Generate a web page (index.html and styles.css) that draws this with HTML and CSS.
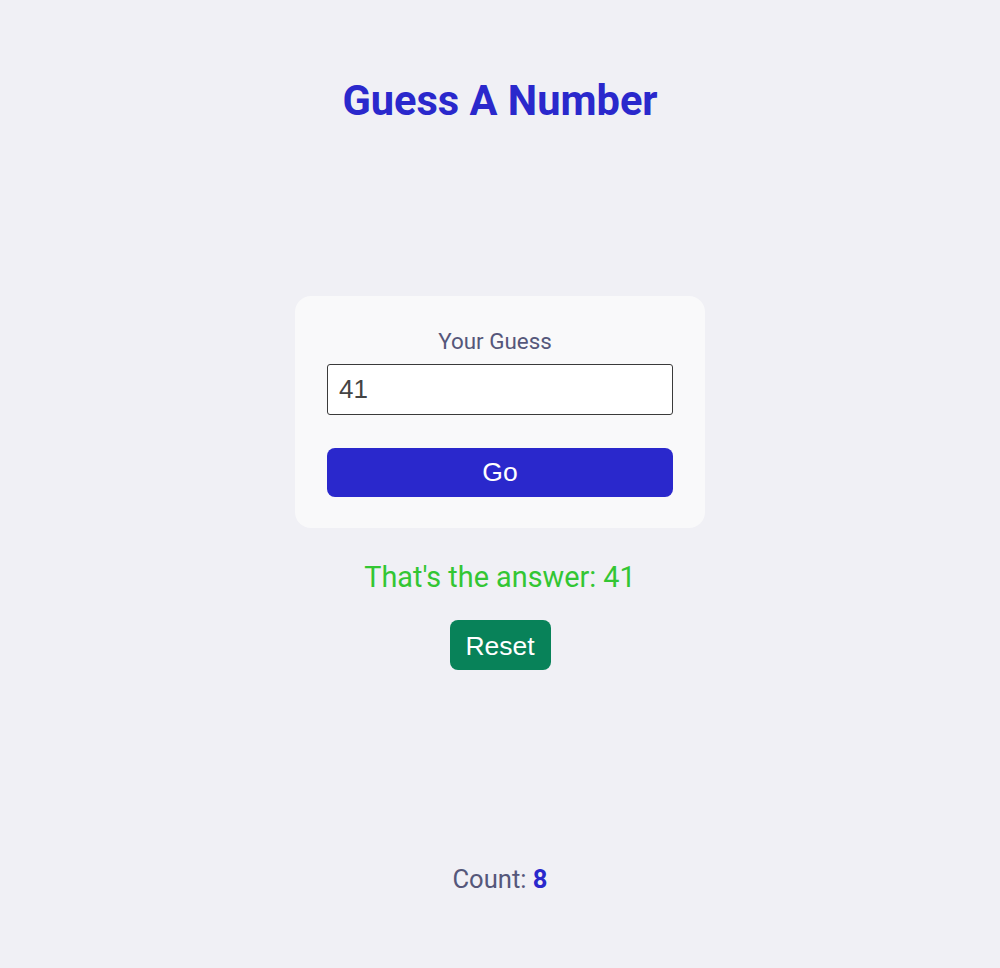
FILE: index.html
```html
<!DOCTYPE html>
<html lang="en">
<head>
<meta charset="utf-8">
<title>Guess A Number</title>
<link rel="stylesheet" href="styles.css">
</head>
<body>
  <header class="header">
    <h1 class="title">Guess A Number</h1>
  </header>
  <main class="main">
    <form class="card">
      <label class="label" for="guess">Your Guess</label>
      <input class="input" id="guess" type="text" value="41">
      <button class="go" type="button">Go</button>
    </form>
    <p class="answer">That's the answer: 41</p>
    <button class="reset" type="button">Reset</button>
  </main>
  <footer class="footer">
    <p class="count">Count: <strong class="count-num">8</strong></p>
  </footer>
</body>
</html>
```
FILE: styles.css
```css
* { box-sizing: border-box; }
html, body { margin: 0; padding: 0; }
body {
  min-height: 100vh;
  background: #f0f0f5;
  font-family: Roboto, "Liberation Sans", sans-serif;
  display: flex;
  flex-direction: column;
  align-items: center;
}
.header { padding-top: 76px; }
.title {
  margin: 0;
  font-size: 41.6px;
  line-height: 50px;
  font-weight: 700;
  color: #2a28cc;
  text-align: center;
}
.main {
  padding-top: 170px;
  display: flex;
  flex-direction: column;
  align-items: center;
}
.card {
  width: 410px;
  background: #f9f9fa;
  border-radius: 16px;
  padding: 32px 32px 31px;
  display: flex;
  flex-direction: column;
}
.label {
  font-size: 22.4px;
  line-height: 26px;
  color: #55577a;
  text-align: center;
  margin-bottom: 10px;
  padding-right: 10px;
}
.input {
  width: 100%;
  height: 51px;
  border: 1px solid #3a3a3a;
  border-radius: 3px;
  background: #fff;
  padding: 0 11px;
  font-family: "Liberation Sans", Arial, sans-serif;
  font-size: 26px;
  color: #444;
  margin-bottom: 33px;
}
.go {
  width: 100%;
  height: 49px;
  border: none;
  border-radius: 8px;
  background: #2a28cc;
  color: #fff;
  font-family: "Liberation Sans", Arial, sans-serif;
  font-size: 26.5px;
  cursor: pointer;
}
.answer {
  margin: 33px 0 26px;
  font-size: 28.8px;
  line-height: 33px;
  color: #33c633;
}
.reset {
  width: 101px;
  height: 50px;
  border: none;
  border-radius: 8px;
  background: #088259;
  color: #fff;
  font-family: "Liberation Sans", Arial, sans-serif;
  font-size: 26.5px;
  cursor: pointer;
  padding: 3px 0 0;
}
.footer {
  margin-top: auto;
  padding-bottom: 74px;
}
.count {
  margin: 0;
  font-size: 25.6px;
  line-height: 30px;
  color: #55577a;
}
.count-num { color: #2a28cc; font-weight: 700; }
```
